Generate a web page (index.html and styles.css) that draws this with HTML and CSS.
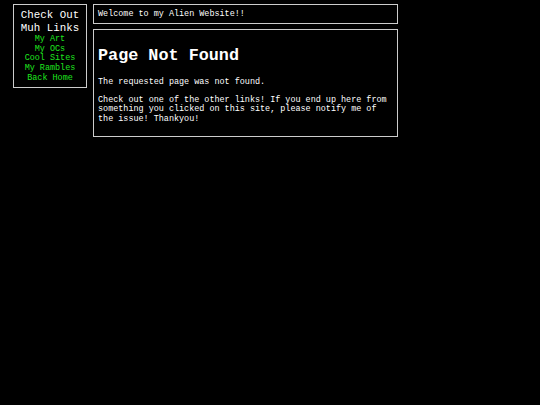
FILE: index.html
```html
<!DOCTYPE html>
<html>
<head>
<meta charset="utf-8">
<link rel="stylesheet" href="styles.css">
</head>
<body>
<div class="layout">
  <nav class="sidebar">
    <div class="side-title">Check Out<br>Muh Links</div>
    <a href="#">My Art</a>
    <a href="#">My OCs</a>
    <a href="#">Cool Sites</a>
    <a href="#">My Rambles</a>
    <a href="#">Back Home</a>
  </nav>
  <div class="content">
    <div class="welcome">Welcome to my Alien Website!!</div>
    <main class="main">
      <h1 class="title">Page Not Found</h1>
      <p class="para">The requested page was not found.</p>
      <p class="para">Check out one of the other links! If you end up here from something you clicked on this site, please notify me of the issue! Thankyou!</p>
    </main>
  </div>
</div>
</body>
</html>
```
FILE: styles.css
```css
html, body {
  margin: 0;
  padding: 0;
  background: #000;
}
body {
  color: #fff;
  font-family: "Liberation Mono", "DejaVu Sans Mono", monospace;
  font-size: 8.45px;
  line-height: 9.7px;
}
.layout {
  display: flex;
  align-items: flex-start;
  gap: 6px;
  padding: 4px 0 0 13px;
}
.sidebar {
  box-sizing: border-box;
  width: 74px;
  border: 1px solid #ccc;
  padding: 4px 0 3px;
  display: flex;
  flex-direction: column;
  align-items: center;
  text-align: center;
}
.side-title {
  font-size: 10.8px;
  line-height: 13px;
}
.sidebar a {
  color: #1fe61f;
  text-decoration: none;
  line-height: 9.7px;
}
.content {
  width: 305px;
  display: flex;
  flex-direction: column;
  gap: 5px;
}
.welcome {
  box-sizing: border-box;
  border: 1px solid #ccc;
  padding: 4px;
  line-height: 10px;
}
.main {
  box-sizing: border-box;
  border: 1px solid #ccc;
  padding: 4px 4px 3px;
}
.title {
  font-size: 16.8px;
  font-weight: bold;
  line-height: 19px;
  margin: 12.3px 0 12.3px;
}
.para {
  margin: 8.4px 0;
}
```
